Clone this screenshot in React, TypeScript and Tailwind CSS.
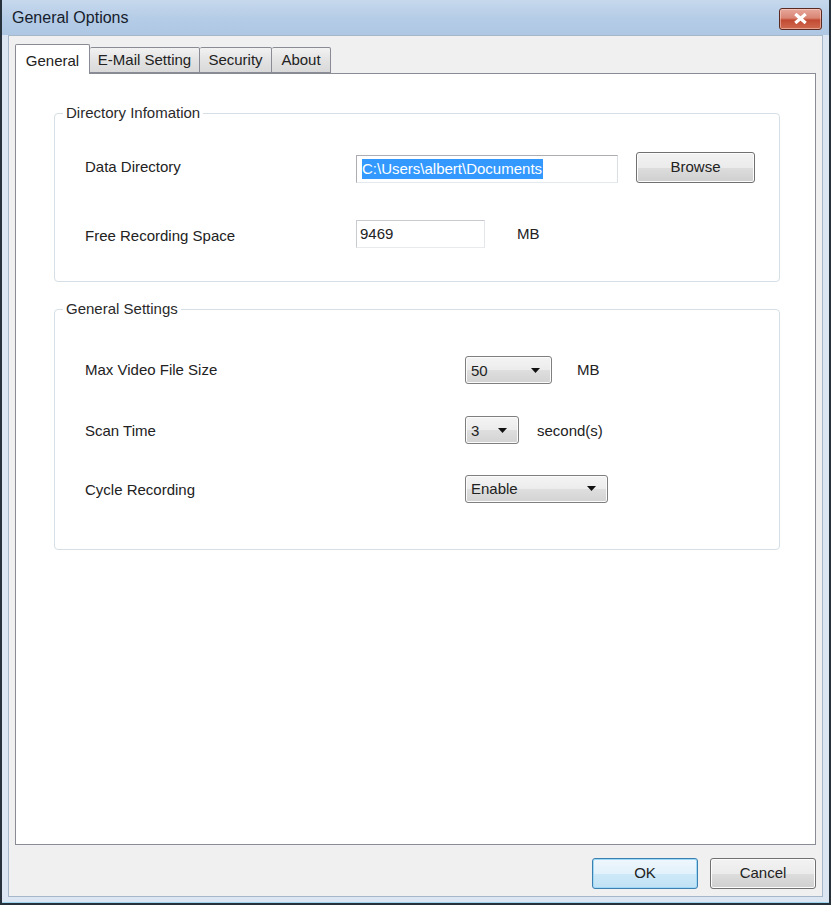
import React from "react";

function Arrow() {
  return (
    <svg width="9" height="5" viewBox="0 0 9 5" className="shrink-0">
      <path d="M0 0 H9 L4.5 5 Z" fill="#111" />
    </svg>
  );
}

function Combo({ value, w }: { value: string; w: string }) {
  return (
    <div
      className={`${w} h-[28px] flex items-center justify-between pl-[5px] pr-[11px] rounded-[3px] border border-[#7f7f7f] bg-[linear-gradient(to_bottom,#f4f4f4_0%,#ececec_48%,#dedede_52%,#d3d3d3_100%)] shadow-[inset_0_0_0_1px_#fbfbfb]`}
    >
      <span className="leading-none">{value}</span>
      <Arrow />
    </div>
  );
}

function Group({ title, children, className }: { title: string; children: React.ReactNode; className?: string }) {
  return (
    <fieldset className={`border border-[#d5dfe5] rounded-[4px] px-[8px] ${className ?? ""}`}>
      <legend className="px-[3px] leading-[18px] text-[15px] text-[#2a2a2a]">{title}</legend>
      {children}
    </fieldset>
  );
}

export default function App() {
  return (
    <div className="w-[831px] h-[905px] flex flex-col bg-[#dbe6f2] border-x-2 border-b-2 border-[#26313c] font-['Liberation_Sans',Arial,sans-serif] text-[15px] text-[#222]">
      {/* Title bar */}
      <div className="h-[35px] shrink-0 flex items-center justify-between pl-[10px] pr-[7px] bg-[linear-gradient(to_bottom,#c6d8ec,#b3cbe6_60%,#aec7e3)]">
        <span className="text-[16px] text-[#15202c] mt-[1px]">General Options</span>
        <div className="w-[43px] h-[22px] mt-[2px] rounded-[3px] border border-[#5a2a22] bg-[linear-gradient(to_bottom,#e7a89b_0%,#d98574_45%,#c24a33_55%,#cf6a4f_100%)] flex items-center justify-center shadow-[inset_0_0_0_1px_rgba(255,220,210,0.5)]">
          <svg width="13" height="11" viewBox="0 0 13 11">
            <path d="M2.5 2 L10.5 9 M10.5 2 L2.5 9" stroke="#fff" strokeWidth="3.2" strokeLinecap="square" />
          </svg>
        </div>
      </div>

      {/* Frame */}
      <div className="flex-1 flex px-[6px] pb-[5px] border-b border-[#9fd3ee]">
        <div className="flex-1 flex flex-col bg-[#f0f0f0] border border-[#a5b7c9] px-[6px]">
          {/* Tabs */}
          <div className="mt-[8px] h-[30px] flex items-end relative z-10">
            <div className="w-[75px] h-[30px] bg-white border border-b-0 border-[#898c95] rounded-t-[2px] flex items-start justify-center pt-[5px]">
              General
            </div>
            <div className="w-[110px] h-[26px] mb-[1px] border border-l-0 border-[#898c95] rounded-t-[2px] bg-[linear-gradient(to_bottom,#f2f2f2,#e3e3e3_50%,#d9d9d9)] flex items-center justify-center">
              E-Mail Setting
            </div>
            <div className="w-[72px] h-[26px] mb-[1px] border border-l-0 border-[#898c95] rounded-t-[2px] bg-[linear-gradient(to_bottom,#f2f2f2,#e3e3e3_50%,#d9d9d9)] flex items-center justify-center">
              Security
            </div>
            <div className="w-[59px] h-[26px] mb-[1px] border border-l-0 border-[#898c95] rounded-t-[2px] bg-[linear-gradient(to_bottom,#f2f2f2,#e3e3e3_50%,#d9d9d9)] flex items-center justify-center">
              About
            </div>
          </div>

          {/* Panel */}
          <div className="flex-1 -mt-[1px] bg-white border border-[#898c95] pl-[38px] pr-[35px]">
            <Group title="Directory Infomation" className="mt-[30px] pt-[29px] pb-[33px]">
              <div className="h-[32px] flex items-center pl-[22px]">
                <span className="w-[271px] shrink-0">Data Directory</span>
                <div className="w-[262px] h-[28px] mt-[4px] border border-[#abadb3] border-r-[#dbdfe6] border-b-[#e3e9ef] bg-white flex items-center pl-[5px]">
                  <span className="bg-[#3399ff] text-white leading-[20px] pr-[1px]">C:\Users\albert\Documents</span>
                </div>
                <div className="ml-[18px] w-[119px] h-[31px] rounded-[3px] border border-[#707070] bg-[linear-gradient(to_bottom,#f2f2f2_0%,#ebebeb_50%,#dddddd_51%,#cfcfcf_100%)] shadow-[inset_0_0_0_1px_#fcfcfc] flex items-center justify-center">
                  Browse
                </div>
              </div>
              <div className="mt-[37px] h-[28px] flex items-center pl-[22px]">
                <span className="w-[271px] shrink-0 mt-[4px]">Free Recording Space</span>
                <div className="w-[129px] h-[28px] border border-[#c8cbd0] border-r-[#e3e6ea] border-b-[#e8eaed] bg-white flex items-center pl-[3px]">
                  9469
                </div>
                <span className="ml-[32px]">MB</span>
              </div>
            </Group>

            <Group title="General Settings" className="mt-[18px] pt-[38px] pb-[46px]">
              <div className="h-[28px] flex items-center pl-[22px]">
                <span className="w-[380px] shrink-0">Max Video File Size</span>
                <Combo value="50" w="w-[87px]" />
                <span className="ml-[25px]">MB</span>
              </div>
              <div className="mt-[32px] h-[28px] flex items-center pl-[22px]">
                <span className="w-[380px] shrink-0 mt-[3px]">Scan Time</span>
                <Combo value="3" w="w-[54px]" />
                <span className="ml-[18px] mt-[2px]">second(s)</span>
              </div>
              <div className="mt-[30px] h-[29px] flex items-center pl-[22px]">
                <span className="w-[380px] shrink-0 mt-[3px]">Cycle Recording</span>
                <Combo value="Enable" w="w-[143px]" />
              </div>
            </Group>
          </div>

          {/* Buttons */}
          <div className="mt-[13px] mb-[7px] h-[31px] flex justify-end gap-[12px]">
            <div className="w-[106px] h-[31px] rounded-[3px] border border-[#3c7fb1] bg-[linear-gradient(to_bottom,#eef7fc_0%,#e2f1fb_50%,#cde9f8_51%,#c0e2f5_100%)] shadow-[inset_0_0_0_1px_#9fd9f6] flex items-center justify-center">
              OK
            </div>
            <div className="w-[106px] h-[31px] rounded-[3px] border border-[#707070] bg-[linear-gradient(to_bottom,#f2f2f2_0%,#ebebeb_50%,#dddddd_51%,#cfcfcf_100%)] shadow-[inset_0_0_0_1px_#fcfcfc] flex items-center justify-center">
              Cancel
            </div>
          </div>
        </div>
      </div>
    </div>
  );
}
